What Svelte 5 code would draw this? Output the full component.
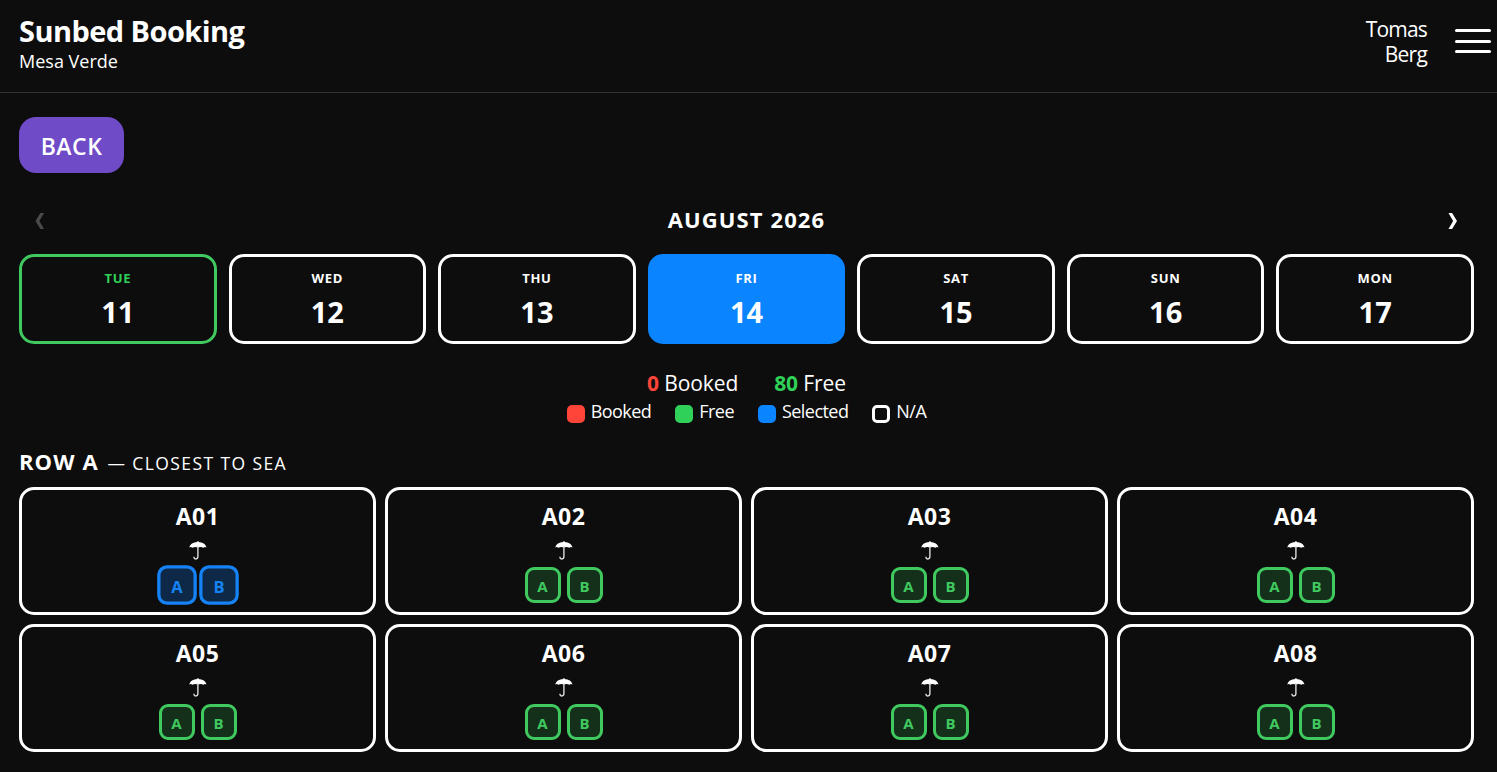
<script lang="ts">
  type Day = { name: string; date: number; today?: boolean };

  const days: Day[] = [
    { name: 'Tue', date: 11, today: true },
    { name: 'Wed', date: 12 },
    { name: 'Thu', date: 13 },
    { name: 'Fri', date: 14 },
    { name: 'Sat', date: 15 },
    { name: 'Sun', date: 16 },
    { name: 'Mon', date: 17 }
  ];

  const umbrellas = ['A01', 'A02', 'A03', 'A04', 'A05', 'A06', 'A07', 'A08'];
  const beds = ['A', 'B'];

  let selectedDate = $state(14);
  let selectedBeds = $state(['A01-A', 'A01-B']);

  function toggleBed(id: string) {
    selectedBeds = selectedBeds.includes(id)
      ? selectedBeds.filter((bed) => bed !== id)
      : [...selectedBeds, id];
  }
</script>

<header class="topbar">
  <div class="brand">
    <h1>Sunbed Booking</h1>
    <p>Mesa Verde</p>
  </div>
  <div class="account">
    <span class="user">Tomas Berg</span>
    <button class="menu" aria-label="Menu">
      <span></span>
      <span></span>
      <span></span>
    </button>
  </div>
</header>

<main>
  <button class="back">BACK</button>

  <div class="month">
    <button class="arrow" aria-label="Previous" disabled>
      <svg width="10" height="16" viewBox="0 0 10 16"><path d="M5.4 0H9L4.4 8L9 16H5.4L.5 8Z" /></svg>
    </button>
    <h2>AUGUST 2026</h2>
    <button class="arrow" aria-label="Next">
      <svg width="10" height="16" viewBox="0 0 10 16"><path d="M4.1 0H.5L5.1 8L.5 16H4.1L9 8Z" /></svg>
    </button>
  </div>

  <div class="days">
    {#each days as day}
      <button
        class="day"
        class:today={day.today}
        class:selected={day.date === selectedDate}
        onclick={() => (selectedDate = day.date)}
      >
        <span class="day-name">{day.name}</span>
        <span class="day-date">{day.date}</span>
      </button>
    {/each}
  </div>

  <div class="stats">
    <span><b class="red">0</b> Booked</span>
    <span><b class="green">80</b> Free</span>
  </div>

  <div class="legend">
    <span class="key"><i class="swatch booked"></i>Booked</span>
    <span class="key"><i class="swatch free"></i>Free</span>
    <span class="key"><i class="swatch picked"></i>Selected</span>
    <span class="key"><i class="swatch"></i>N/A</span>
  </div>

  <h3>Row A <small>— Closest to sea</small></h3>

  <div class="grid">
    {#each umbrellas as umbrella}
      <div class="card">
        <div class="card-name">{umbrella}</div>
        <svg class="umbrella" width="18" height="19" viewBox="0 0 18 19">
          <path
            class="canopy"
            d="M.4 6.5C.9 3.2 4.4 1.2 8.2 1V.2H9.6V1C13.4 1.2 16.9 3.2 17.4 6.5Q15.8 5.6 14.5 6.7Q11.8 5.6 8.9 6.5Q6 5.6 3.3 6.7Q2 5.6 .4 6.5Z"
          />
          <path class="handle" d="M8.9 5V15.6C8.9 18.7 4.9 18.7 4.9 15.8" />
        </svg>
        <div class="beds">
          {#each beds as bed}
            <button
              class="bed"
              class:selected={selectedBeds.includes(`${umbrella}-${bed}`)}
              onclick={() => toggleBed(`${umbrella}-${bed}`)}
            >
              {bed}
            </button>
          {/each}
        </div>
      </div>
    {/each}
  </div>
</main>

<style>
  :global(body) {
    background: #0d0d0d;
    color: #fff;
    font-family: 'Segoe UI', 'Open Sans', 'Noto Sans', sans-serif;
    overflow: hidden;
  }

  h1,
  h2,
  h3,
  p {
    margin: 0;
  }

  button {
    box-sizing: border-box;
    margin: 0;
    padding: 0;
    border: 0;
    background: none;
    color: inherit;
    font: inherit;
    cursor: pointer;
  }

  .topbar {
    display: flex;
    justify-content: space-between;
    box-sizing: border-box;
    height: 93px;
    padding: 13px 6px 0 19px;
    border-bottom: 1px solid #333;
  }

  h1 {
    font-size: 29px;
    font-weight: 700;
    line-height: 36px;
    letter-spacing: -0.55px;
  }

  .brand p {
    font-size: 18px;
    line-height: 24px;
  }

  .account {
    display: flex;
    align-items: flex-start;
    gap: 28px;
  }

  .user {
    width: 70px;
    padding-top: 4px;
    font-size: 21px;
    line-height: 25px;
    letter-spacing: -0.8px;
    text-align: right;
  }

  .menu {
    display: flex;
    flex-direction: column;
    justify-content: space-between;
    width: 36px;
    height: 24px;
    margin-top: 16px;
  }

  .menu span {
    height: 3px;
    border-radius: 2px;
    background: #fff;
  }

  main {
    padding: 24px 23px 0 19px;
  }

  .back {
    display: block;
    width: 105px;
    height: 56px;
    padding-top: 2px;
    border-radius: 17px;
    background: #6f4bc7;
    font-size: 23px;
    font-weight: 650;
    line-height: 54px;
    letter-spacing: 0.5px;
  }

  .month {
    display: flex;
    align-items: center;
    justify-content: space-between;
    height: 36px;
    margin-top: 29px;
    padding: 0 16px;
  }

  h2 {
    padding-bottom: 2px;
    font-size: 22px;
    font-weight: 700;
    line-height: 34px;
    letter-spacing: 1.1px;
  }

  .arrow {
    display: flex;
    padding-top: 2px;
  }

  .arrow svg {
    fill: #fff;
  }

  .arrow:disabled svg {
    fill: #4a4a4a;
  }

  .days {
    display: grid;
    grid-template-columns: repeat(7, 1fr);
    gap: 12px;
    margin-top: 16px;
  }

  .day {
    display: flex;
    flex-direction: column;
    align-items: center;
    height: 90px;
    padding-top: 11px;
    border: 3px solid #fff;
    border-radius: 15px;
  }

  .day-name {
    font-size: 13px;
    font-weight: 700;
    line-height: 20px;
    letter-spacing: 0.7px;
    text-transform: uppercase;
  }

  .day-date {
    margin-top: 5px;
    font-size: 29px;
    font-weight: 700;
    line-height: 38px;
  }

  .day.today {
    border-color: #3fc95f;
  }

  .day.today .day-name {
    color: #30d158;
  }

  .day.selected {
    border-color: #0a84ff;
    background: #0a84ff;
  }

  .stats {
    display: flex;
    justify-content: center;
    gap: 36px;
    margin-top: 24px;
    font-size: 21px;
    line-height: 30px;
    letter-spacing: -0.1px;
  }

  .red {
    color: #ff453a;
  }

  .green {
    color: #30d158;
  }

  .legend {
    display: flex;
    justify-content: center;
    gap: 24px;
    font-size: 18px;
    line-height: 27px;
    letter-spacing: -0.55px;
  }

  .key {
    display: flex;
    gap: 6px;
  }

  .swatch {
    box-sizing: border-box;
    width: 18px;
    height: 18px;
    margin-top: 7px;
    border: 3px solid #fff;
    border-radius: 5px;
  }

  .swatch.booked {
    border-color: #ff453a;
    background: #ff453a;
  }

  .swatch.free {
    border-color: #30d158;
    background: #30d158;
  }

  .swatch.picked {
    border-color: #0a84ff;
    background: #0a84ff;
  }

  h3 {
    height: 30px;
    margin-top: 21px;
    font-size: 22px;
    font-weight: 700;
    line-height: 30px;
    letter-spacing: 1.1px;
    text-transform: uppercase;
  }

  h3 small {
    margin-left: 2px;
    font-size: 17.5px;
    font-weight: 400;
    letter-spacing: 1.4px;
  }

  .grid {
    display: grid;
    grid-template-columns: repeat(4, 1fr);
    gap: 9px;
    margin-top: 11px;
  }

  .card {
    display: flex;
    flex-direction: column;
    align-items: center;
    box-sizing: border-box;
    height: 128px;
    padding-top: 10px;
    border: 3px solid #fff;
    border-radius: 15px;
  }

  .card-name {
    font-size: 23px;
    font-weight: 700;
    line-height: 32px;
    letter-spacing: 0.4px;
  }

  .umbrella {
    margin-top: 9px;
  }

  .canopy {
    fill: #fff;
  }

  .handle {
    fill: none;
    stroke: #ddd;
    stroke-width: 1.4;
  }

  .beds {
    display: flex;
    gap: 6px;
    margin-top: 7px;
  }

  .bed {
    width: 36px;
    height: 36px;
    padding-top: 2px;
    border: 3px solid #3fc95f;
    border-radius: 9px;
    background: #14301b;
    color: #3fc95f;
    font-size: 15px;
    font-weight: 700;
    line-height: 28px;
  }

  .bed.selected {
    border-color: #1583f5;
    background: #0d2947;
    color: #1583f5;
    transform: scale(1.1);
  }
</style>
